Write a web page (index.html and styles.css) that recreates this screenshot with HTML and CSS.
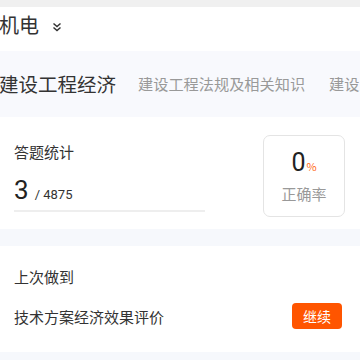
FILE: index.html
```html
<!DOCTYPE html>
<html>
<head>
<meta charset="utf-8">
<link rel="stylesheet" href="styles.css">
</head>
<body>
<div class="topstrip"></div>
<header class="header">
  <span class="title">机电</span>
  <svg class="chev" width="10" height="10" viewBox="0 0 10 10"><path d="M1.5 1.5 L5 4.5 L8.5 1.5 M1.5 5.5 L5 8.5 L8.5 5.5" fill="none" stroke="#333" stroke-width="1.5"/></svg>
</header>
<nav class="tabs">
  <span class="tab active">建设工程经济</span>
  <span class="tab">建设工程法规及相关知识</span>
  <span class="tab">建设工程项目管理</span>
</nav>
<section class="card stats">
  <div class="left">
    <div class="label">答题统计</div>
    <div class="count"><span class="done">3</span><span class="total">/ 4875</span></div>
    <div class="bar"></div>
  </div>
  <div class="rate">
    <div class="pct"><span class="num">0</span><span class="sign">%</span></div>
    <div class="rlabel">正确率</div>
  </div>
</section>
<section class="card last">
  <div class="label">上次做到</div>
  <div class="row">
    <span class="chapter">技术方案经济效果评价</span>
    <button class="btn">继续</button>
  </div>
</section>
</body>
</html>
```
FILE: styles.css
```css
* { box-sizing: border-box; }
body {
  margin: 0;
  background: #f6f8fc;
  font-family: "Noto Sans CJK SC", "Noto Sans", sans-serif;
  color: #333;
  overflow: hidden;
}
.topstrip { height: 7px; background: #f0f0f0; }
.header {
  height: 44px;
  background: #fff;
  display: flex;
  align-items: center;
  gap: 13px;
  margin-left: -1px;
}
.title { font-size: 20px; line-height: 1; color: #333; margin-top: -8px; }
.chev { margin-top: -5px; }
.tabs {
  height: 66px;
  display: flex;
  align-items: center;
  gap: 24px;
  white-space: nowrap;
  overflow: hidden;
  background: #f8f9fd;
  margin-left: -1px;
}
.tab { font-size: 15.2px; color: #999; line-height: 1; flex: none; }
.tab.active { font-size: 19.5px; color: #333; margin-right: -2px; }
.card { background: #fff; }
.stats {
  height: 112px;
  display: flex;
  justify-content: space-between;
  padding: 25px 15px 0 14px;
}
.left { width: 191px; }
.label { font-size: 15px; line-height: 20px; color: #333; }
.count { margin-top: 13px; display: flex; align-items: baseline; gap: 6px; }
.done { font-size: 26px; line-height: 30px; color: #222; font-family: "Roboto", sans-serif; }
.total { font-size: 13px; color: #333; font-family: "Roboto", sans-serif; }
.bar { margin-top: 5px; height: 2px; background: #eee; }
.rate {
  width: 82px;
  height: 82px;
  margin-top: -7px;
  border: 1px solid #e4e4e4;
  border-radius: 7px;
  display: flex;
  flex-direction: column;
  align-items: center;
  padding-top: 12px;
}
.pct { display: flex; align-items: baseline; }
.num { font-size: 25px; line-height: 30px; color: #222; font-family: "Roboto", sans-serif; }
.sign { font-size: 11px; color: #ff6a1a; margin-left: 1px; }
.rlabel { font-size: 15px; color: #999; margin-top: 6px; line-height: 20px; }
.last {
  margin-top: 17px;
  height: 106px;
  padding: 21px 18px 0 14px;
}
.row { display: flex; justify-content: space-between; align-items: center; margin-top: 16px; }
.chapter { font-size: 15px; color: #333; }
.btn {
  width: 50px;
  height: 26px;
  border: none;
  border-radius: 4px;
  background: #ff5500;
  color: #fff;
  font-size: 14px;
  font-family: "Noto Sans CJK SC", sans-serif;
  padding: 0;
}
```
